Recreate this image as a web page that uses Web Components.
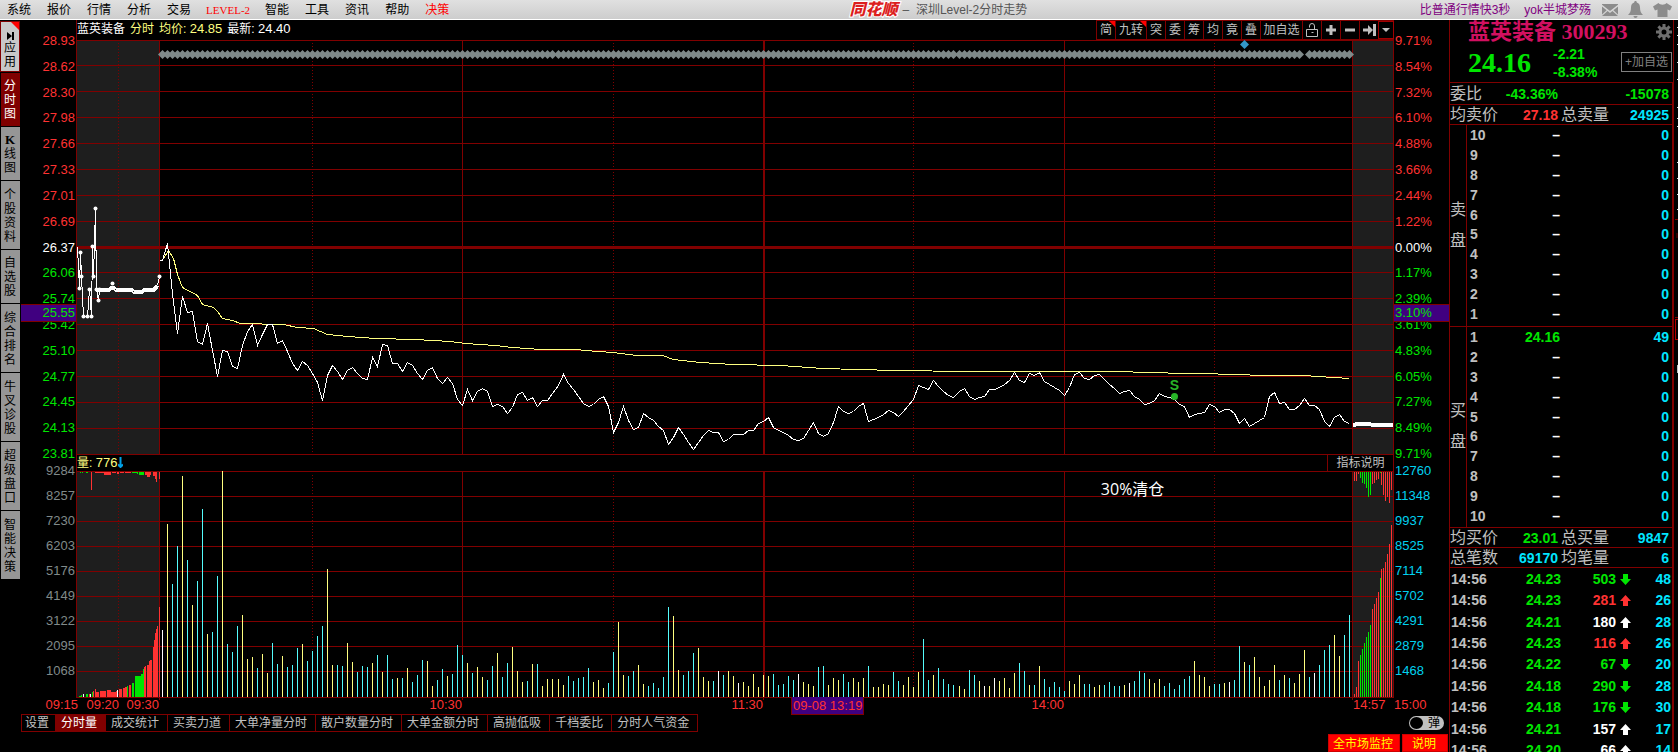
<!DOCTYPE html>
<html lang="zh-CN">
<head>
<meta charset="utf-8">
<title>同花顺 - 深圳Level-2分时走势</title>
<style>
  html, body { margin: 0; height: 100%; background: #000; overflow: hidden; }
  body {
    --line: #800000; --up: #ff3232; --down: #00e600; --vol: #00e5ff; --grey: #c0c0c0; --avg: #ffff80; --cursor: #400080;
    font: 12px/16px "Liberation Sans", "Noto Sans CJK SC", sans-serif; color: #c0c0c0;
  }
</style>
</head>
<body>
<stock-app></stock-app>
<script>
const define = (name, css, render) => customElements.define(name, class extends HTMLElement {
  connectedCallback() {
    if (this.shadowRoot) return;
    const root = this.attachShadow({ mode: 'open' });
    const t = document.createElement('template');
    t.innerHTML = `<style>*{box-sizing:border-box}button,a{font:inherit;color:inherit;background:none;border:0;padding:0;margin:0;text-decoration:none;white-space:nowrap}${css}</style>${render(this)}`;
    root.append(t.content.cloneNode(true));
  }
});

/* ---------- Menu bar ---------- */
define('menu-bar', `
  :host { display: flex; align-items: center; justify-content: space-between; height: 20px; padding: 0 6px 0 7px;
    background: linear-gradient(#e0e0e0, #cdcdcd); border-bottom: 1px solid #fff; color: #000; }
  nav, .user { display: flex; align-items: center; gap: 16px; }
  .hot { color: #f00; }
  .level { font-family: "Liberation Serif", serif; font-size: 11px; width: 42px; display: flex; justify-content: center; }
  .title { display: flex; align-items: center; color: #555; margin: 0 0 0 8px; font-size: 12px; font-weight: 400; }
  .logo { font-size: 16px; font-weight: 900; font-style: italic; color: #dc1e1e; -webkit-text-stroke: 2px #fff; paint-order: stroke fill; margin-right: 5px; }
  .user { color: #800080; gap: 14px; }
  .icons { display: flex; align-items: center; gap: 10px; margin-left: -3px; }
  svg { display: block; fill: #8c8c8c; }
`, () => `
  <nav>${['系统', '报价', '行情', '分析', '交易'].map(t => `<button>${t}</button>`).join('')}
  <button class="hot level">LEVEL-2</button>
  ${['智能', '工具', '资讯', '帮助'].map(t => `<button>${t}</button>`).join('')}<button class="hot">决策</button></nav>
  <h1 class="title"><span class="logo">同花顺</span>–&nbsp;&nbsp;深圳Level-2分时走势</h1>
  <div class="user"><a href="#">比普通行情快3秒</a><a href="#">yok半城梦殇</a>
    <span class="icons">
      <svg width="16" height="12" viewBox="0 0 16 12"><path d="M0 0h16v.8L8 7 0 .8zM0 2.6l4.6 3.6L0 10.4zM16 2.6v7.8l-4.6-4.2zM5.6 7 8 8.9 10.4 7 16 12H0z"/></svg>
      <svg width="15" height="17" viewBox="0 0 15 17"><path d="M7.500 0c.8 0 1.300.6 1.300 1.400C11 2 12 4 12 6.500c0 4 1 5.500 3 7.500H0c2-2 3-3.500 3-7.500C3 4 4 2 6.200 1.400 6.200.6 6.700 0 7.500 0zM5.500 15h4c0 1.200-.9 2-2 2s-2-.8-2-2z"/></svg>
      <svg width="19" height="14" viewBox="0 0 19 14"><path d="M5.500 0C7 2.300 12 2.300 13.500 0L19 3.500 17 7.500 14.500 6.500V14h-10V6.500L2 7.500 0 3.500z"/></svg>
    </span></div>`);

/* ---------- Vertical page tabs ---------- */
define('side-tabs', `
  :host { display: flex; flex-direction: column; gap: 1px; width: 20px; padding-top: 1px; color: #000; }
  button { width: 19px; margin-left: 1px; background: #969696; padding: 6px 4px 5px 3px; line-height: 14px; white-space: normal; word-break: break-all; text-align: center; }
  .h3 { height: 53px; } .h4 { height: 68px; }
  .h3 b { font: 700 13px/14px "Liberation Serif", serif; }
  .on { background: #800000; color: #fff; }
  .apps { position: relative; height: 51px; width: 20px; margin-left: 0; background: #c8c8c8; border: 1px solid #800000; padding: 8px 3px 0; }
  .apps::after { content: ""; position: absolute; right: 0; top: 0; border: 4px solid; border-color: #f00 #f00 transparent transparent; }
  svg { display: block; margin: 0 0 1px 3px; }
`, () => `
  <button class="apps"><svg width="7" height="8"><path d="M0 0l5 4-5 4zM5 0h2v8H5z"/></svg>应用</button>
  ${['分时图', 'K线图', '个股资料', '自选股', '综合排名', '牛叉诊股', '超级盘口', '智能决策'].map((t, i) => `<button class="h${t.length}${i ? '' : ' on'}">${t.replace('K', '<b>K</b>')}</button>`).join('')}`);

/* ---------- Chart toolbar ---------- */
define('chart-toolbar', `
  :host { display: flex; justify-content: space-between; height: 20px; line-height: 18px; color: #fff; font-size: 12px; }
  .t { display: flex; gap: 5px; } .t b { font-weight: 400; font-size: 13px; } .y { color: var(--avg); }
  .tools { display: flex; border-top: 1px solid #800000; border-bottom: 1px solid #800000; color: var(--grey); height: 20px; margin-right: -1px; }
  .tools button { position: relative; width: 19px; border-left: 1px solid #800000; display: flex; align-items: center; justify-content: center; }
  .tools .w2 { width: 31px; } .tools .w3 { width: 42px; } .tools .drop { width: 16px; border: 1px solid #a00000; }
  .tools .new::after { content: ""; position: absolute; right: 0; top: 0; border: 3px solid; border-color: #f00 #f00 transparent transparent; }
  svg { display: block; fill: none; stroke: var(--grey); }
`, () => `
  <div class="t"><span>蓝英装备</span><span class="y">分时</span><span class="y">均价: <b>24.85</b></span><span>最新: <b>24.40</b></span></div>
  <div class="tools"><button class="new">简</button><button class="w2 new">九转</button>${[...'突委筹均竟叠'].map(c => `<button>${c}</button>`).join('')}<button class="w3">加自选</button>
  <button aria-label="锁定"><svg width="12" height="14"><path d="M.5 6.500h11v7H.5zM3.500 4.500V3Q3.500.5 6 .5T8.500 3v3.500M5.500 9.500h2"/></svg></button>
  <button aria-label="放大"><svg width="12" height="12"><path d="M6 1v10M1 6h10" stroke-width="3"/></svg></button>
  <button aria-label="缩小"><svg width="12" height="12"><path d="M1 6h10" stroke-width="3"/></svg></button>
  <button aria-label="最右"><svg width="13" height="12"><path d="M0 6h6M11.500 0v12" stroke-width="3"/><path d="M5 1l5 5-5 5z" fill="#c0c0c0" stroke="none"/></svg></button>
  <button class="drop" aria-label="更多"><svg width="8" height="4"><path d="M0 0h8L4 4z" fill="#c0c0c0" stroke="none"/></svg></button></div>`);

/* ---------- Plot data: one sample per trading minute ---------- */
const price = [260,243,293,333,296,312,311,341,344,323,350,376,350,351,366,368,345,331,324,345,334,324,324,343,340,351,363,370,361,365,
373,382,400,375,365,371,379,370,367,373,378,379,357,366,344,345,363,363,371,362,365,373,379,370,367,378,383,377,383,399,
405,389,400,391,388,391,406,404,406,413,407,394,392,400,397,406,400,400,393,385,374,383,389,396,403,406,404,399,396,406,
432,422,406,420,429,427,413,417,420,426,430,444,437,427,434,442,449,442,435,430,432,432,441,439,434,434,434,430,430,423,
421,417,427,430,432,435,439,440,438,430,422,433,436,433,422,406,411,413,411,406,403,421,419,417,414,410,412,416,411,405,
399,385,387,389,380,386,391,395,397,391,388,396,399,397,396,389,389,387,384,380,372,380,382,373,375,372,381,384,387,390,
395,387,374,372,378,379,375,374,379,384,388,393,391,390,396,399,404,403,400,393,396,397,399,404,406,417,414,413,412,404,
406,412,409,409,413,423,418,426,423,420,417,396,392,403,402,409,409,405,398,405,405,409,421,426,417,414,421,423];
const average = [[163,258],[168,250],[173,258],[177,274],[182,287],[197,295],[202,304],[213,307],[217,311],[222,318],[232,320],[240,323],[283,324],[297,327],[313,328],[327,334],[347,336],[375,338],[415,339],[450,341],[465,343],[495,345],[512,347],[540,349],[575,349],[597,351],[613,352],[636,355],[662,355],[673,359],[700,362],[733,364],[780,365],[822,368],[857,369],[895,370],[967,371],[1128,371],[1137,372],[1197,373],[1237,374],[1262,375],[1303,375],[1317,376],[1349,378]];
const volume = `W630 Y524 C584 C546 Y476 C560 Y605 C581 C509 Y634 C632 C576 Y471 C644 C652 C626 Y615 Y659 Y657 C668 Y654 Y673 C643 C664 Y656 C667 C665 C648 Y644 C661
C651 C636 C626 Y569 Y665 C665 C666 Y643 Y662 C672 C666 C667 Y663 C655 Y672 C655 C679 Y678 C678 Y668 C682 C675 C660 Y661 Y686 C680 C669 Y676 C674 C645
C655 Y663 C673 Y667 Y677 C680 C666 Y653 C677 C663 Y647 Y671 Y682 C681 Y664 C664 Y686 Y679 Y679 Y679 Y685 C676 C681 C678 C677 C668 Y682 Y680 Y688 C683
C652 Y622 Y675 C676 C671 Y665 Y684 C686 C683 C688 C677 C607 Y616 Y670 C675 C671 C653 Y648 Y677 Y681 C681 W671 C675 Y671 Y676 W683 Y682 Y686 Y674 Y687
Y675 Y676 C674 C685 C684 C676 C680 W674 Y682 Y684 Y686 C667 C666 Y685 Y678 Y680 C674 C682 Y678 Y682 Y678 C666 Y687 Y687 Y684 Y685 C672 C681 Y685 Y677
Y687 Y672 C639 C680 Y675 C668 C679 C684 C685 Y686 Y689 C670 C675 Y681 W686 Y686 W678 Y681 Y678 Y688 Y673 C663 C671 Y685 C685 Y666 C679 C687 C682 C687
C691 Y681 Y684 Y675 C684 C684 Y687 Y685 C685 C682 C686 C686 Y685 W683 C681 C671 C673 Y679 Y683 Y679 C686 C683 C689 C685 C679 C676 Y661 Y675 Y677 Y686
C684 C684 Y683 W682 C680 C646 Y662 C665 Y657 Y677 Y686 Y680 Y665 C680 Y675 C678 Y683 Y674 Y650 C677 W673 C665 C650 C645 Y635 Y656 C635 C615`.split(/\s+/);
const minuteX = i => 162 + 5 * i + (i >= 79) + (i >= 159);
const ink = { W: '#ffffff', Y: '#ffff80', C: '#54fcfc', R: '#ff3232', G: '#00e600' };
const rect = (x, y, w, h, c) => `<rect x="${x}" y="${y}" width="${w}" height="${h}" fill="${c}"/>`;
const poly = (pts, c, w = 1) => `<polyline points="${pts.map(([x, y]) => `${x + .5},${y + .5}`).join(' ')}" fill="none" stroke="${c}" stroke-width="${w}"/>`;
const diamond = (x, y, r, c) => `<path d="M${x - r} ${y}L${x} ${y - r}L${x + r} ${y}L${x} ${y + r}z" fill="${c}"/>`;
const dark = '#800000';
const verticals = (y, h) => rect(159, y, 1, h, dark) + rect(462, y, 1, h, dark) + rect(763, y, 2, h, dark) + rect(1064, y, 1, h, dark) + rect(1352, y, 1, h, dark)
  + [118, 312, 613, 913, 1214].map(x => `<path d="M${x}.5 ${y + 3}v${h - 3}" stroke="${dark}" stroke-dasharray="1 2"/>`).join('');
const auctions = (y, h) => rect(77, y, 82, h, '#1e1e1e') + rect(1353, y, 40, h, '#1e1e1e');
const plot = (y, h, body) => `<svg viewBox="77 ${y} 1316 ${h}" height="${h}" preserveAspectRatio="none" shape-rendering="crispEdges">${body}</svg>`;

/* ---------- Price plot ---------- */
define('price-plot', `
  :host { display: block; position: relative; height: 415px; }
  svg { display: block; width: 100%; }
  .sell { position: absolute; left: 83.400%; top: 338px; transform: translateX(-50%); color: #28b428; font-weight: 700; font-size: 14px; line-height: 14px; }
`, () => {
  const grid = [40, 65, 91, 117, 143, 169, 195, 221, 272, 298, 324, 350, 376, 402, 428, 454].map(y => rect(77, y, 1316, 1, dark)).join('') + rect(77, 246, 1316, 3, dark);
  const open = [[77,247],[79,288],[80,252],[81,276],[83,316],[87,316],[89,289],[91,316],[92,246],[93,276],[95,208],[96,289],[98,300],[99,289]];
  const flat = [[95,289],[109,289],[111,287],[113,287],[115,289],[131,289],[133,291],[142,291],[144,289],[154,289],[157,285]];
  return plot(40, 415, auctions(41, 413) + grid + verticals(40, 415)
    + `<g shape-rendering="auto">${price.map((_, i) => i === 228 ? '' : diamond(minuteX(i) + .5, 54.5, 4.5, '#808a8a')).join('')}${diamond(1244.5, 44.5, 4.5, '#3296c8')}</g>`
    + poly(average, '#ffff80') + poly([[159, 260], ...price.map((y, i) => [minuteX(i), y])], '#fff')
    + poly(open, '#fff') + poly(flat, '#fff', 4) + poly([[157,285],[159,276]], '#fff')
    + [...open.slice(1), [112,283], [159,276]].map(([x, y]) => `<circle cx="${x + .5}" cy="${y + .5}" r="2" fill="#fff" shape-rendering="auto"/>`).join('')
    + rect(1353, 423, 3, 4, '#fff') + rect(1355, 422, 16, 4, '#fff') + rect(1371, 423, 22, 4, '#fff')
    + `<circle cx="1174.500" cy="396.500" r="3.500" fill="#28b428" shape-rendering="auto"/>`) + `<span class="sell">S</span>`;
});

/* ---------- Volume plot ---------- */
define('volume-plot', `
  :host { display: block; position: relative; height: 227px; }
  svg { display: block; width: 100%; overflow: visible; }
  .note { position: absolute; left: 77.800%; top: 6px; color: #fff; font: 16px/24px "Open Sans", "Noto Sans CJK SC", sans-serif; white-space: nowrap; }
`, () => {
  const grid = [471, 496, 521, 546, 571, 596, 621, 646, 671, 697].map(y => rect(77, y, 1316, 1, dark)).join('');
  /* opening auction: x, width, top, colour */
  const open = 'G79,2,696 G81,1,695 W83,1,694 G86,2,694 R89,1,694 W90,1,694 G92,1,692 R93,1,691 R95,1,689 R96,3,692 R100,6,691 R107,4,690 R111,2,692 R113,3,692 R116,1,691 W117,1,690 R119,3,689 R123,2,688 R125,2,687 G127,1,686 R129,2,685 G132,2,683 G135,4,676 G139,2,676 G141,2,674 G143,1,669 R144,1,667 R145,1,666 R147,2,665 R149,1,661 R150,2,660 R153,1,647 R154,1,640 R155,1,633 R156,1,629 R157,1,626 R159,1,607';
  const hang = 'G80,1,473 G82,1,473 G86,2,473 R91,1,490 R95,9,473 R104,7,475 R112,4,473 R117,2,474 R120,4,473 R125,6,473 G132,5,473 G137,1,474 G139,5,475 R145,2,475 R147,3,477 R150,1,475 R153,2,476 R155,1,479 R156,1,482 R159,1,479';
  const parse = s => s.split(' ').map(t => [ink[t[0]], ...t.slice(1).split(',').map(Number)]);
  const endX = k => k < 14 ? 1354 + 2 * k : 1353 + 2 * k;
  const end = 'R694 R687 R661 G655 G649 G643 G637 G632 G625 R609 R604 R598 R592 G578 R569 R568 R562 R554 R544 R525'.split(' ');
  const endHang = 'R481 R481 R474 G478 G483 G484 G488 G497 G495 R484 R483 R480 R479 G473 R485 R495 R501 R497 R503 R490'.split(' ');
  return plot(471, 227, auctions(472, 225) + grid + verticals(472, 226)
    + volume.map((v, i) => rect(minuteX(i), +v.slice(1), 1, 697 - v.slice(1), ink[v[0]])).join('')
    + parse(open).map(([c, x, w, y]) => rect(x, y, w, 697 - y, c)).join('')
    + parse(hang).map(([c, x, w, y]) => rect(x, 472, w, y - 472, c)).join('')
    + end.map((v, k) => rect(endX(k), +v.slice(1), 1, 697 - v.slice(1), ink[v[0]])).join('')
    + endHang.map((v, k) => rect(endX(k), 472, 1, v.slice(1) - 472, ink[v[0]])).join('')
    + [159, 462, 763, 1064, 1352].map(x => rect(x, 698, 1, 2, dark)).join('')) + `<span class="note">30%清仓</span>`;
});

/* ---------- Value axis ---------- */
const axes = {
  left: ['28.93 28.62 28.30 27.98 27.66 27.33 27.01 26.69 26.37 26.06 25.74 25.42 25.10 24.77 24.45 24.13 23.81', '9284 8257 7230 6203 5176 4149 3122 2095 1068', '25.55'],
  right: ['9.71% 8.54% 7.32% 6.10% 4.88% 3.66% 2.44% 1.22% 0.00% 1.17% 2.39% 3.61% 4.83% 6.05% 7.27% 8.49% 9.71%', '12760 11348 9937 8525 7114 5702 4291 2879 1468', '3.10%']
};
define('value-axis', `
  :host { display: flex; flex-direction: column; gap: 3px; position: relative; padding: 14px 1px 0; font-size: 13px; line-height: 14px; }
  :host([side=left]) { text-align: right; }
  div { display: flex; flex-direction: column; justify-content: space-between; }
  .p { height: 427px; color: var(--down); } .v { height: 214px; color: #808a8a; }
  :host([side=right]) .v { color: #00d2f0; }
  .up { color: var(--up); } .zero { color: #fff; }
  .cursor { position: absolute; left: 0; right: 0; top: 284px; height: 18px; line-height: 16px; padding: 0 1px; background: var(--cursor); border: solid #800000; border-width: 1px 0; color: var(--down); }
  :host([side=left]) .cursor { left: 1px; }
`, el => { const [p, v, c] = axes[el.getAttribute('side')]; return `
  <div class="p">${p.split(' ').map((t, i) => `<span class="${i < 8 ? 'up' : i === 8 ? 'zero' : ''}">${t}</span>`).join('')}</div>
  <div class="v">${v.split(' ').map(t => `<span>${t}</span>`).join('')}</div><span class="cursor">${c}</span>`; });

/* ---------- Time axis ---------- */
define('time-axis', `
  :host { display: grid; grid-template-columns: 58px 41fr 40fr 303fr 301fr 301fr 289fr 41fr 55px; height: 16px; color: var(--up); font-size: 13px; line-height: 14px; text-align: right; }
  .l { text-align: left; } .c { position: relative; }
  .cursor { position: absolute; left: 28px; top: -1px; height: 18px; padding: 0 1px; border: 1px solid #800000; border-top: 0; font-weight: 400; line-height: 17px; background: var(--cursor); white-space: nowrap; }
`, () => `<span>09:15</span><span>09:20</span><span>09:30</span><span>10:30</span><span>11:30</span><span class="c">14:00<b class="cursor">09-08 13:19</b></span><span></span><span class="l">14:57</span><span class="l">15:00</span>`);

/* ---------- Indicator tabs and footer ---------- */
define('indicator-tabs', `
  :host { display: flex; justify-content: space-between; align-items: flex-start; padding: 0 5px 0 1px; color: var(--grey); height: 20px; }
  .tabs { display: flex; border: 1px solid #800000; height: 18px; }
  .tabs button { padding: 0 8px 0 5px; border-right: 1px solid #800000; line-height: 17px; }
  .tabs button:first-child { padding: 0 6px 0 3px; } .tabs button:last-child { border: 0; }
  .tabs .on { background: #800000; color: #fff; }
  label { display: flex; align-items: center; justify-content: flex-end; position: relative; width: 35px; height: 14px; margin-top: 2px; padding-right: 4px; border-radius: 7px; background: #c0c0c0; color: #000; }
  input { appearance: none; position: absolute; left: 1px; top: 1px; width: 13px; height: 12px; margin: 0; border-radius: 50%; background: #000; }
`, () => `<div class="tabs">${['设置', '分时量', '成交统计', '买卖力道', '大单净量分时', '散户数量分时', '大单金额分时', '高抛低吸', '千档委比', '分时人气资金'].map((t, i) => `<button class="${i === 1 ? 'on' : ''}">${t}</button>`).join('')}</div><label><input type="checkbox">弹</label>`);

define('alert-buttons', `
  :host { display: flex; justify-content: flex-end; gap: 2px; padding-right: 1px; height: 18px; }
  button { background: #f00; color: #ff0; padding: 0 6px 0 4px; border: 1px solid #d00000; line-height: 19px; }
  .help { padding: 0 11px 0 9px; }
`, () => `<button>全市场监控</button><button class="help">说明</button>`);

/* ---------- Chart panel ---------- */
define('chart-panel', `
  :host { display: block; flex: 1; min-width: 0; }
  .body { display: grid; grid-template-columns: 56px 1fr 55px; }
  .plots { border: solid #800000; border-width: 0 1px; min-width: 0; }
  .sub { display: flex; justify-content: space-between; height: 16px; color: var(--avg); font-size: 12px; }
  .sub b { font-weight: 400; font-size: 13px; }
  .sub svg { margin-left: 1px; vertical-align: -1px; fill: none; stroke: #00a0e6; stroke-width: 2; }
  .sub button { width: 66px; border-left: 1px solid #800000; color: var(--grey); line-height: 16px; }
`, () => `
  <div class="body"><value-axis side="left"></value-axis>
  <div class="plots"><chart-toolbar></chart-toolbar><price-plot></price-plot>
  <div class="sub"><span>量: <b>776</b><svg width="5" height="11"><path d="M2.500 0v10M0 7.500l2.500 2.500L5 7.500"/></svg></span><button>指标说明</button></div><volume-plot></volume-plot></div>
  <value-axis side="right"></value-axis></div>
  <time-axis></time-axis><indicator-tabs></indicator-tabs><alert-buttons></alert-buttons>`);

/* ---------- Ten-level order book, one side ---------- */
define('book-side', `
  :host { display: flex; border-bottom: 1px solid #800000; font-weight: 700; font-size: 14px; line-height: 16px; }
  .name { width: 17px; border-right: 1px solid #800000; font-weight: 400; font-size: 16px; line-height: 31px; text-align: center; display: flex; flex-direction: column; justify-content: center; padding-bottom: 2px; }
  .book { flex: 1; height: 200px; }
  :host([side=sell]) .book { margin-bottom: 1px; }
  table { width: 100%; border-collapse: collapse; height: 199px; }
  td { padding: 0; text-align: right; } td:first-child { text-align: left; padding-left: 3px; width: 52px; }
  td:nth-child(2) { width: 41px; color: #fff; } td:nth-child(2).q { color: var(--down); } td:last-child { color: var(--vol); padding-right: 3px; }
`, el => {
  const sell = el.getAttribute('side') === 'sell';
  const rows = Array.from({ length: 10 }, (_, i) => sell ? 10 - i : i + 1);
  return `<div class="name"><span>${sell ? '卖' : '买'}</span><span>盘</span></div><div class="book"><table>${rows.map(n => !sell && n === 1 ? `<tr><td>1</td><td class="q">24.16</td><td>49</td></tr>` : `<tr><td>${n}</td><td>–</td><td>0</td></tr>`).join('')}</table></div>`;
});

/* ---------- Tick list ---------- */
define('tick-list', `
  :host { display: block; font-weight: 700; font-size: 14px; line-height: 16px; }
  table { border-collapse: collapse; width: 100%; height: 193px; }
  td { padding: 0; text-align: right; color: var(--down); } td:first-child { color: var(--grey); text-align: left; padding-left: 1px; width: 62px; }
  td:nth-child(2) { width: 49px; } td:nth-child(3) { width: 55px; } td:nth-child(4) { width: 15px; } td:last-child { color: var(--vol); padding-right: 1px; }
  td.r { color: var(--up); } td.w { color: #fff; }
  svg { display: inline-block; vertical-align: -1px; fill: currentColor; }
`, () => {
  const rows = ['24.23 503 g 48', '24.23 281 r 26', '24.21 180 w 28', '24.23 116 r 26', '24.22 67 g 20', '24.18 290 g 28', '24.18 176 g 30', '24.21 157 w 17', '24.20 66 w 14'];
  return `<table>${rows.map(s => { const [p, v, c, n] = s.split(' ');
    const arrow = c === 'g' ? 'M3 0h5v5h3L5.500 11 0 5h3z' : 'M3 11h5V6h3L5.500 0 0 6h3z';
    return `<tr><td>14:56</td><td>${p}</td><td class="${c}">${v}</td><td class="${c}"><svg width="11" height="11"><path d="${arrow}"/></svg></td><td>${n}</td></tr>`; }).join('')}</table>`;
});

/* ---------- Quote panel ---------- */
define('quote-panel', `
  :host { display: block; width: 225px; border-left: 1px solid #800000; border-right: 1px solid #800000; overflow: hidden; flex: none; }
  header { height: 63px; border-bottom: 1px solid #800000; padding: 1px 1px 0 18px; }
  .name { display: flex; justify-content: space-between; align-items: center; height: 22px; }
  h2 { margin: 0; font: 700 22px/22px "Liberation Serif", "Noto Sans CJK SC", serif; color: #d21060; white-space: nowrap; }
  .now { display: flex; align-items: center; height: 39px; color: var(--down); font-weight: 700; }
  .last { font: 700 28px/36px "Liberation Serif", serif; width: 85px; }
  .chg { flex: 1; font-size: 14px; line-height: 18px; }
  .add { width: 51px; height: 20px; border: 1px solid #808080; color: #808080; font-weight: 400; margin-bottom: 2px; }
  .row { display: grid; grid-template-columns: 52px 56px 51px 1fr; align-items: center; height: 20px; padding: 0 3px 0 0; border-bottom: 1px solid #800000; font-size: 16px; line-height: 18px; white-space: nowrap; }
  .row.tall { height: 22px; }
  .row b { font-size: 14px; text-align: right; } .row span + b + span { padding-left: 3px; }
  .g { color: var(--down); } .r { color: var(--up); } .c { color: var(--vol); }
  .rest { border-right: 1px solid #800000; }
`, () => {
  const row = (a, b, bc, c, d, dc, cls = '') => `<div class="row ${cls}"><span>${a}</span><b class="${bc}">${b}</b><span>${c}</span><b class="${dc}">${d}</b></div>`;
  return `<header><div class="name"><h2>蓝英装备 300293</h2>
    <svg width="16" height="16" viewBox="-8 -8 16 16"><circle r="4" fill="none" stroke="#6e6e6e" stroke-width="3"/><path d="M0-8V-5M0 5V8M-8 0H-5M5 0H8M-5.600-5.600-3.500-3.500M3.500 3.500 5.600 5.600M-5.600 5.600-3.500 3.500M3.500-3.500 5.600-5.600" stroke="#6e6e6e" stroke-width="3"/></svg></div>
    <div class="now"><span class="last">24.16</span><span class="chg">-2.21<br>-8.38%</span><button class="add">+加自选</button></div></header>
    <div class="rest">${row('委比', '-43.36%', 'g', '', '-15078', 'g', 'tall')}${row('均卖价', '27.18', 'r', '总卖量', '24925', 'c')}
    <book-side side="sell"></book-side><book-side side="buy"></book-side>
    ${row('均买价', '23.01', 'g', '总买量', '9847', 'c')}${row('总笔数', '69170', 'c', '均笔量', '6', 'c')}<tick-list></tick-list></div>`;
});

/* ---------- Sliver of the next panel at the window edge ---------- */
define('edge-strip', `:host { display: block; width: 4px; flex: none; overflow: hidden; } svg { display: block; }`,
  () => `<svg width="4" height="360" shape-rendering="crispEdges">${[7, 15, 24, 42, 59, 87, 98, 106, 142, 158, 174, 189].map(y => rect(3, y, 1, 1, '#ddd')).join('')}${rect(1, 199, 3, 1, dark)}${rect(2, 213, 2, 5, '#300000')}${rect(1, 297, 3, 1, dark)}${rect(1, 299, 1, 21, '#b00000')}${rect(1, 299, 3, 1, '#b00000')}${rect(1, 319, 3, 1, '#b00000')}${rect(3, 345, 1, 8, '#c0c0c0')}</svg>`);

define('stock-app', `
  :host { display: flex; flex-direction: column; height: 100vh; overflow: hidden; }
  main { display: flex; flex: 1; min-height: 0; overflow: hidden; }
`, () => `<menu-bar></menu-bar><main><side-tabs></side-tabs><chart-panel></chart-panel><quote-panel></quote-panel><edge-strip></edge-strip></main>`);
</script>
</body>
</html>
